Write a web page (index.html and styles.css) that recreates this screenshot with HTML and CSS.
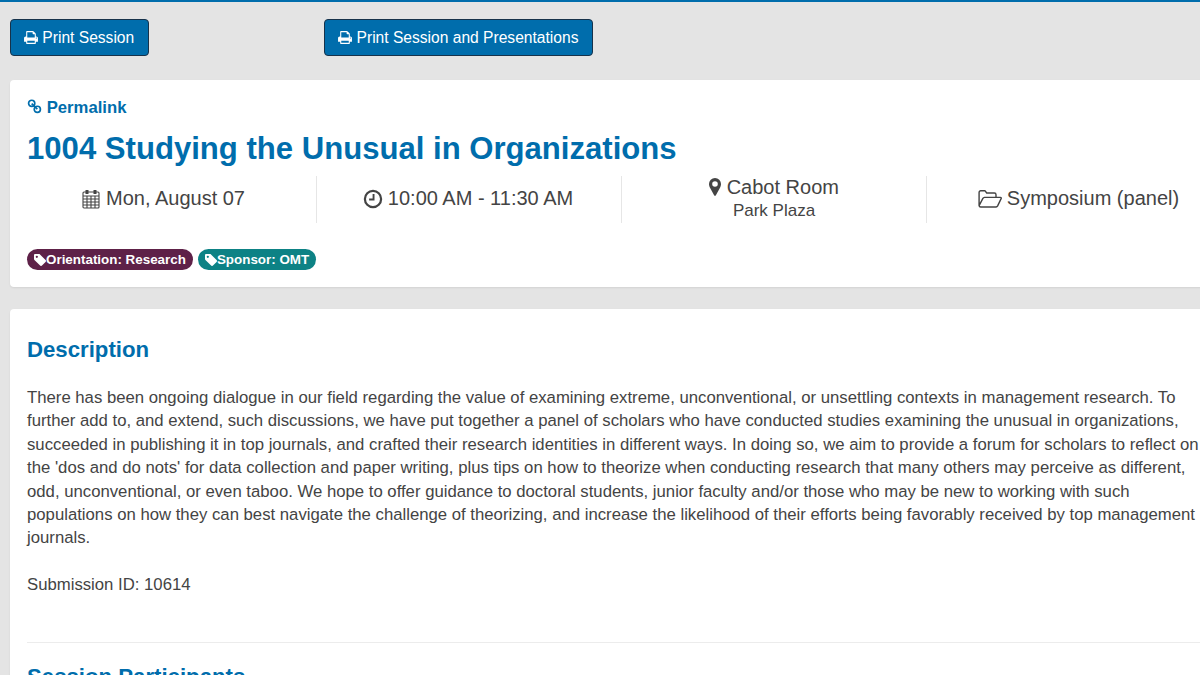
FILE: index.html
```html
<!DOCTYPE html>
<html lang="en">
<head>
    <meta charset="UTF-8">
    <title>1004 Studying the Unusual in Organizations</title>
    <link rel="stylesheet" href="styles.css">
</head>
<body>
    <div class="page">
        <div class="print-bar">
            <button class="btn">
                <svg class="icon icon-print" viewBox="0 0 1664 1792"><path fill="currentColor" d="M384 1536h896v-256H384v256zm0-640h896V512h-160q-40 0-68-28t-28-68V256H384v640zm1152 64q0-26-19-45t-45-19-45 19-19 45 19 45 45 19 45-19 19-45zm128 0v416q0 13-9.500 22.500t-22.500 9.500h-224v160q0 40-28 68t-68 28H352q-40 0-68-28t-28-68v-160H32q-13 0-22.500-9.500T0 1376V960q0-79 56.500-135.500T192 768h64V224q0-40 28-68t68-28h672q40 0 88 20t76 48l152 152q28 28 48 76t20 88v256h64q79 0 135.500 56.500T1664 960z"/></svg>
                Print Session
            </button>
            <button class="btn">
                <svg class="icon icon-print" viewBox="0 0 1664 1792"><path fill="currentColor" d="M384 1536h896v-256H384v256zm0-640h896V512h-160q-40 0-68-28t-28-68V256H384v640zm1152 64q0-26-19-45t-45-19-45 19-19 45 19 45 45 19 45-19 19-45zm128 0v416q0 13-9.500 22.500t-22.500 9.500h-224v160q0 40-28 68t-68 28H352q-40 0-68-28t-28-68v-160H32q-13 0-22.500-9.500T0 1376V960q0-79 56.500-135.500T192 768h64V224q0-40 28-68t68-28h672q40 0 88 20t76 48l152 152q28 28 48 76t20 88v256h64q79 0 135.500 56.500T1664 960z"/></svg>
                Print Session and Presentations
            </button>
        </div>

        <div class="card session-card">
            <a class="permalink" href="#">
                <svg class="icon icon-link" viewBox="0 0 16 16"><g fill="none" stroke="currentColor" stroke-width="1.800"><circle cx="5" cy="4.800" r="3.300"/><circle cx="11" cy="11.200" r="3.300"/><path d="M5 5l6 6"/></g></svg>
                Permalink
            </a>
            <h1>1004 Studying the Unusual in Organizations</h1>
            <div class="info-row">
                <div class="info-col">
                    <svg class="icon" viewBox="0 0 18 20"><g fill="none" stroke="currentColor" stroke-width="1.100"><rect x="1" y="3" width="16" height="16" rx="1"/><path d="M1 7h16M1 10h16M1 13h16M1 16h16M5 7v12M9 7v12M13 7v12"/></g><path fill="currentColor" d="M3.500 1h3v4h-3zM11.500 1h3v4h-3z"/></svg>
                    Mon, August 07
                </div>
                <div class="info-col">
                    <svg class="icon" viewBox="0 0 18 18"><circle cx="9" cy="9" r="7.300" fill="none" stroke="currentColor" stroke-width="2"/><path d="M9.500 4.500v5H5.500" fill="none" stroke="currentColor" stroke-width="1.700"/></svg>
                    10:00 AM - 11:30 AM
                </div>
                <div class="info-col info-stack">
                    <div>
                        <svg class="icon icon-pin" viewBox="0 0 12 18"><path fill="currentColor" fill-rule="evenodd" d="M6 0a6 6 0 0 1 6 6c0 1.500-.500 2.700-1 3.800L6.900 17.300a1 1 0 0 1-1.800 0L1 9.800C.500 8.700 0 7.500 0 6a6 6 0 0 1 6-6zm0 3.200a2.800 2.800 0 1 0 0 5.600 2.800 2.800 0 0 0 0-5.600z"/></svg>
                        Cabot Room
                    </div>
                    <div class="info-sub">Park Plaza</div>
                </div>
                <div class="info-col">
                    <svg class="icon icon-folder" viewBox="0 0 22 17"><path fill="none" stroke="currentColor" stroke-width="1.300" stroke-linejoin="round" d="M1 14.500V2.500A1.500 1.500 0 0 1 2.500 1h4L8 3h7a1.500 1.500 0 0 1 1.500 1.500V7M1 14.500 4.500 8a2 2 0 0 1 1.500-1h14.500c.800 0 1 .600.700 1.200L18 14.800a2 2 0 0 1-1.500 1H2.500A1.500 1.500 0 0 1 1 14.500z"/></svg>
                    Symposium (panel)
                </div>
            </div>
            <div class="tags">
                <span class="tag tag-orientation">
                    <svg class="tag-icon" viewBox="0 0 14 14"><path fill="currentColor" fill-rule="evenodd" d="M0 1.300C0 .600.600 0 1.300 0h4.400c.500 0 1 .200 1.300.500l6.500 6.500c.700.700.700 1.500 0 2.200l-4.200 4.300c-.700.700-1.500.700-2.200 0L.500 7C.200 6.700 0 6.200 0 5.700zM3.300 2a1.300 1.300 0 1 0 0 2.600 1.300 1.300 0 0 0 0-2.600z"/></svg>Orientation: Research</span>
                <span class="tag tag-sponsor">
                    <svg class="tag-icon" viewBox="0 0 14 14"><path fill="currentColor" fill-rule="evenodd" d="M0 1.300C0 .600.600 0 1.300 0h4.400c.500 0 1 .200 1.300.500l6.500 6.500c.700.700.700 1.500 0 2.200l-4.200 4.300c-.700.700-1.500.700-2.200 0L.500 7C.200 6.700 0 6.200 0 5.700zM3.300 2a1.300 1.300 0 1 0 0 2.600 1.300 1.300 0 0 0 0-2.600z"/></svg>Sponsor: OMT</span>
            </div>
        </div>

        <div class="card">
            <h2>Description</h2>
            <p class="desc">There has been ongoing dialogue in our field regarding the value of examining extreme, unconventional, or unsettling contexts in management research. To further add to, and extend, such discussions, we have put together a panel of scholars who have conducted studies examining the unusual in organizations, succeeded in publishing it in top journals, and crafted their research identities in different ways. In doing so, we aim to provide a forum for scholars to reflect on the 'dos and do nots' for data collection and paper writing, plus tips on how to theorize when conducting research that many others may perceive as different, odd, unconventional, or even taboo. We hope to offer guidance to doctoral students, junior faculty and/or those who may be new to working with such populations on how they can best navigate the challenge of theorizing, and increase the likelihood of their efforts being favorably received by top management journals.</p>
            <p class="submission">Submission ID: 10614</p>
            <hr>
            <h2>Session Participants</h2>
        </div>
    </div>
</body>
</html>
```

FILE: styles.css
```css
* { box-sizing: border-box; }

html, body {
    height: 675px;
    overflow: hidden;
}

body {
    margin: 0;
    background: #e4e4e4;
    border-top: 2px solid #006dac;
    font-family: 'Liberation Sans', Arial, sans-serif;
    font-size: 16.730px;
    line-height: 23.400px;
    color: #444;
}

.page {
    width: 1234px;
    padding: 17px 0 0 10px;
}

.icon {
    height: 1em;
    width: 1em;
    vertical-align: -0.12em;
}

.icon-print {
    width: 14px;
    height: 15px;
}

.icon-link { width: 15px; }
.icon-pin { width: 12px; }
.icon-folder { width: 1.200em; }

.print-bar {
    display: flex;
    gap: 175px;
    margin-bottom: 24px;
}

.btn {
    height: 37px;
    padding: 0 14px 0 13px;
    background: #006dac;
    color: white;
    border: 1px solid #17324a;
    border-radius: 4px;
    font: inherit;
    font-size: 15.600px;
}

.card {
    background: white;
    border-radius: 4px;
    padding: 16px 17px 17px;
    margin-bottom: 22px;
    box-shadow: 0 1px 2px rgba(0,0,0,0.08);
}

.session-card {
    height: 207px;
}

.permalink {
    display: block;
    color: #006dac;
    font-size: 16.700px;
    font-weight: bold;
    text-decoration: none;
}

h1 {
    margin: 12px 0 9px;
    color: #006dac;
    font-size: 31.100px;
    line-height: 36px;
}

.info-row {
    display: grid;
    grid-template-columns: repeat(4, 305px);
    grid-template-rows: 47px;
    margin: 0 -15px;
    font-size: 20px;
}

.info-col {
    display: flex;
    gap: 5px;
    justify-content: center;
    align-items: center;
    padding: 0 2px 2px 0;
    border-right: 1px solid #e6e6e6;
}

.info-col:last-child { border-right: none; }

.info-stack {
    flex-direction: column;
    gap: 0;
    padding: 0 0 1px;
    line-height: 24px;
}

.info-sub {
    font-size: 17px;
}

.tags {
    display: flex;
    gap: 5px;
    margin-top: 26px;
}

.tag {
    display: flex;
    align-items: center;
    height: 21px;
    padding: 0 7px;
    border-radius: 11px;
    color: white;
    font-size: 13.400px;
    font-weight: bold;
}

.tag-icon {
    width: 12px;
    height: 12px;
}

.tag-orientation { background: #5e2148; }
.tag-sponsor { background: #0d8285; }

h2 {
    margin: 11px 0 0;
    color: #006dac;
    font-size: 22.200px;
    line-height: 28px;
}

.desc {
    margin: 22px 0 0;
}

.submission {
    margin: 23.400px 0 0;
}

hr {
    margin: 45px 0 0;
    border: none;
    border-top: 1px solid #ececec;
}

hr + h2 {
    margin-top: 20px;
}
```
